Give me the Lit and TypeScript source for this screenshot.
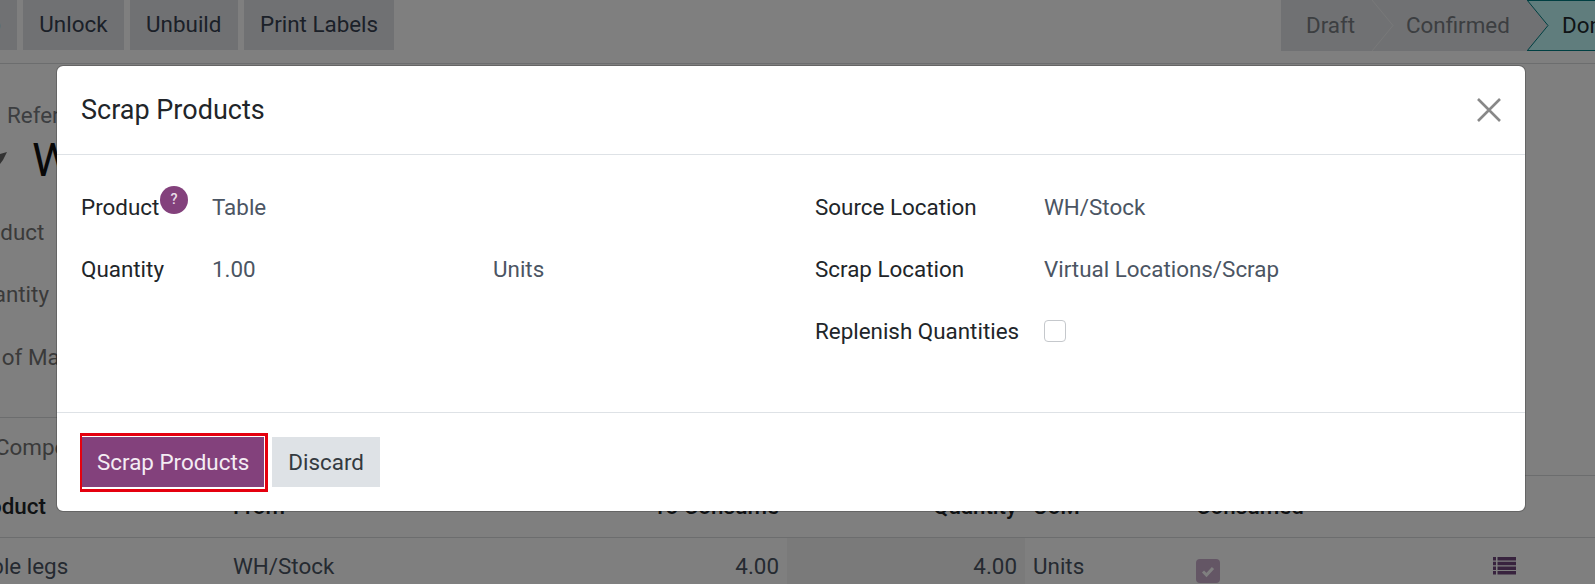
import { LitElement, html, css } from 'lit';
import { customElement } from 'lit/decorators.js';

@customElement('scrap-background')
class ScrapBackground extends LitElement {
    static styles = css`
    :host{
        display: block;
        height: 584px;
        overflow: hidden;
        isolation: isolate;
        background: #fff;
        color: #212529;
    }
    .panel{
        display: flex;
        justify-content: space-between;
        height: 63px;
        border-bottom: 1px solid #d8dadd;
    }
    .buttons{
        display: flex;
        gap: 6px;
        margin-left: -72.5px;
    }
    .buttons span{
        display: flex;
        align-items: center;
        box-sizing: border-box;
        padding: 0 16.3px 2px;
        height: 50px;
        background: #e0e3e7;
        color: #374151;
    }
    .status{
        display: flex;
        flex: none;
        height: 51px;
        width: 314px;
    }
    .step{
        position: relative;
        flex: none;
        display: flex;
        align-items: center;
        box-sizing: border-box;
        padding-bottom: 2px;
        background: #e0e3e7;
        color: #787d82;
        white-space: nowrap;
    }
    .step svg{
        position: absolute;
        left: 100%;
        top: 0;
        z-index: 1;
    }
    .draft{
        width: 91px;
        padding-left: 25px;
    }
    .confirmed{
        width: 155px;
        padding-left: 34px;
    }
    .done{
        width: 68px;
        padding-left: 35px;
        background: #c0fbfb;
        border-top: 1px solid #017e84;
        border-bottom: 1px solid #017e84;
        color: #1f2a2e;
    }
    .ref{
        margin: 38px 0 0 7px;
        height: 26px;
        line-height: 26px;
        color: #787d82;
    }
    .title{
        display: flex;
        align-items: flex-start;
        height: 50px;
        margin-top: 7px;
        font-size: 46px;
        line-height: 50px;
        color: #111;
    }
    .title svg{
        margin: 17px 25px 0 0;
    }
    .fields{
        margin-top: 17px;
        height: 215px;
    }
    .field{
        height: 61.5px;
        line-height: 61.5px;
        margin-left: -34px;
        color: #757575;
    }
    .field:last-child{
        margin-top: 2px;
    }
    .tabs{
        box-sizing: border-box;
        height: 59px;
        border-bottom: 1px solid #d8dadd;
    }
    .tab{
        box-sizing: border-box;
        width: 160px;
        height: 59px;
        line-height: 58px;
        margin-left: -5px;
        border-top: 1px solid #d8dadd;
        background: #fff;
        color: #757575;
    }
    .row{
        display: grid;
        grid-template-columns: 258px 300px 262px 238px 163px 297px 1fr;
        margin-left: -33px;
        height: 61px;
        line-height: 61px;
        color: #4b5563;
    }
    .row.head{
        font-weight: 500;
        color: #212529;
    }
    .row.data{
        line-height: 56px;
        border-top: 1px solid #d8dadd;
    }
    .row > div{
        padding-left: 8px;
        box-sizing: border-box;
        white-space: nowrap;
    }
    .row > div:first-child{
        padding-left: 0;
    }
    .row > .right{
        text-align: right;
        padding: 0 8px 0 0;
    }
    .tint{
        background: #f4f4f4;
    }
    .check{
        display: block;
        margin-top: 21px;
    }
    .list{
        display: block;
        margin-top: 19px;
    }
    `;

    render() {
        return html`
            <div class="panel">
                <div class="buttons">
                    <span>Scrap</span><span>Unlock</span><span>Unbuild</span><span>Print Labels</span>
                </div>
                <div class="status">
                    <div class="step draft">Draft
                        <svg width="22" height="51"><path d="M0 0 L21 25.5 L0 51Z" fill="#e0e3e7"/><path d="M0 0 L21 25.5 L0 51" fill="none" stroke="#f0f1f2"/></svg>
                    </div>
                    <div class="step confirmed">Confirmed
                        <svg width="22" height="51"><path d="M0 0 L21 25.5 L0 51Z" fill="#e0e3e7"/><path d="M0 0 L21 25.5 L0 51" fill="none" stroke="#017e84"/></svg>
                    </div>
                    <div class="step done">Done</div>
                </div>
            </div>
            <div class="ref">Reference</div>
            <div class="title">
                <svg width="7" height="13" viewBox="0 0 7 13"><path d="M0 2 L7 0 L3 8 L0 12Z" fill="#666"/></svg>
                <span>WH/MO/00012</span>
            </div>
            <div class="fields">
                <div class="field">Product</div>
                <div class="field">Quantity</div>
                <div class="field">Bill of Material</div>
            </div>
            <div class="tabs"><div class="tab">Components</div></div>
            <div class="row head">
                <div>Product</div><div>From</div><div class="right">To Consume</div><div class="right">Quantity</div><div>UoM</div><div>Consumed</div><div></div>
            </div>
            <div class="row data">
                <div>Table legs</div><div>WH/Stock</div><div class="right">4.00</div><div class="right tint">4.00</div><div>Units</div>
                <div>
                    <svg class="check" width="24" height="24" viewBox="0 0 24 24"><rect width="24" height="24" rx="4" fill="#c8accb"/><path d="M7 12.500l3.500 3.500L17 9" fill="none" stroke="#fff" stroke-width="3"/></svg>
                </div>
                <div>
                    <svg class="list" width="23" height="18" viewBox="0 0 23 18" fill="#71477c"><path d="M0 0h3v3.500H0zM4.500 0H23v3.500H4.500zM0 4.700h3v3.500H0zM4.500 4.700H23v3.500H4.500zM0 9.400h3v3.500H0zM4.500 9.400H23v3.500H4.500zM0 14.100h3v3.500H0zM4.500 14.100H23v3.500H4.500z"/></svg>
                </div>
            </div>
        `;
    }
}

@customElement('app-root')
export default class AppRoot extends LitElement {
    static styles = css`
    :host{
        display: block;
        position: relative;
        height: 584px;
        overflow: hidden;
        font-family: Roboto, "Noto Sans", sans-serif;
        font-size: 22.4px;
    }
    .backdrop{
        position: absolute;
        inset: 0;
        background: rgba(0,0,0,.5);
    }
    .modal{
        position: absolute;
        left: 56px;
        top: 65px;
        width: 1470px;
        height: 447px;
        box-sizing: border-box;
        border: 1px solid rgba(0,0,0,.2);
        background: #fff;
        background-clip: padding-box;
        border-radius: 7px;
        display: flex;
        flex-direction: column;
        color: #212529;
    }
    .header{
        height: 89px;
        box-sizing: border-box;
        flex: none;
        display: flex;
        align-items: center;
        justify-content: space-between;
        padding: 0 24px;
        border-bottom: 1px solid #dee2e6;
        font-size: 27px;
    }
    .header svg{
        display: block;
    }
    .body{
        flex: 1;
        display: grid;
        grid-template-columns: 734px 1fr;
        padding: 21px 0 0 24px;
    }
    .group{
        display: grid;
        grid-template-rows: 62.5px 61.5px 61px;
        align-items: center;
        align-content: start;
    }
    .left{
        grid-template-columns: 131px 281px 1fr;
    }
    .rightcol{
        grid-template-columns: 229px 1fr;
    }
    .value{
        color: #4b5563;
    }
    .label{
        position: relative;
    }
    .help{
        position: absolute;
        left: 79px;
        top: -8px;
        width: 28px;
        height: 28px;
        border-radius: 50%;
        background: #83417c;
        color: #e9dde8;
        font-size: 14.5px;
        font-weight: 500;
        line-height: 28px;
        text-align: center;
    }
    .box{
        width: 22px;
        height: 22px;
        box-sizing: border-box;
        border: 1px solid #c5c8cc;
        border-radius: 4px;
        background: #fff;
    }
    .footer{
        flex: none;
        height: 99px;
        box-sizing: border-box;
        border-top: 1px solid #dee2e6;
        display: flex;
        align-items: flex-start;
        gap: 4px;
        padding: 20px 0 0 23px;
    }
    .mark{
        border: solid #e5000f;
        border-width: 3px 3px 3px 2px;
        padding: 1px 1px 2px 0;
    }
    .btn{
        height: 50px;
        display: flex;
        align-items: center;
        padding: 0 15px;
        white-space: nowrap;
    }
    .primary{
        background: #83417c;
        color: #f4ecf3;
    }
    .secondary{
        margin-top: 4px;
        padding: 0 16px;
        background: #dee2e6;
        color: #343a40;
    }
    `;

    render() {
        return html`
            <scrap-background></scrap-background>
            <div class="backdrop"></div>
            <div class="modal">
                <div class="header">
                    <span>Scrap Products</span>
                    <svg width="24" height="24" viewBox="0 0 24 24"><path d="M1 1L23 23M23 1L1 23" fill="none" stroke="#888" stroke-width="2.6"/></svg>
                </div>
                <div class="body">
                    <div class="group left">
                        <div class="label">Product<span class="help">?</span></div>
                        <div class="value" style="grid-column: span 2">Table</div>
                        <div class="label">Quantity</div>
                        <div class="value">1.00</div>
                        <div class="value">Units</div>
                    </div>
                    <div class="group rightcol">
                        <div class="label">Source Location</div>
                        <div class="value">WH/Stock</div>
                        <div class="label">Scrap Location</div>
                        <div class="value">Virtual Locations/Scrap</div>
                        <div class="label">Replenish Quantities</div>
                        <div class="box"></div>
                    </div>
                </div>
                <div class="footer">
                    <div class="mark"><div class="btn primary">Scrap Products</div></div>
                    <div class="btn secondary">Discard</div>
                </div>
            </div>
        `;
    }
}
